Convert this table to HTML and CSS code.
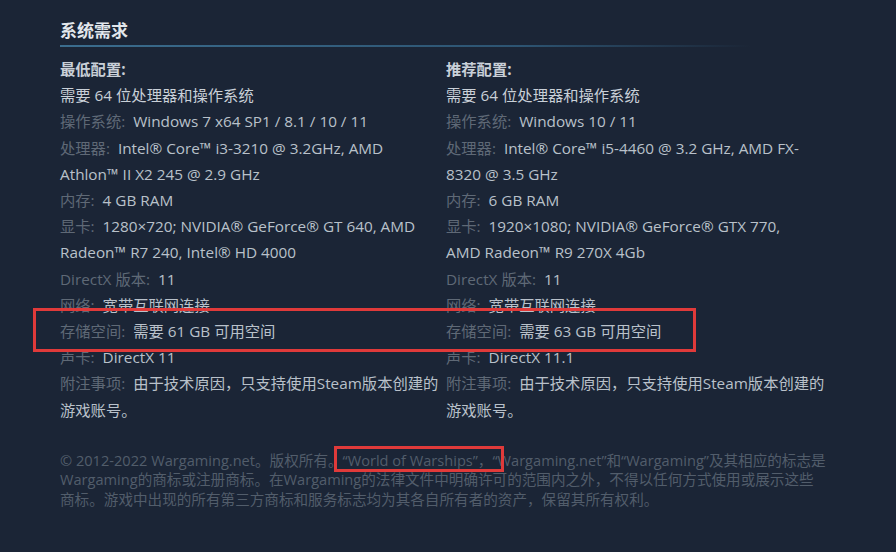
FILE: index.html
```html
<!DOCTYPE html>
<html lang="zh-CN">
<head>
  <meta charset="UTF-8" />
  <title>系统需求</title>
  <link rel="stylesheet" href="styles.css">
</head>
<body>
  <div class="page">
    <h2 class="title">系统需求</h2>

    <div class="sysreq">
      <div class="col">
        <div class="col-head">最低配置:</div>
        <ul>
          <li class="strong">需要 64 位处理器和操作系统</li>
          <li><span class="lbl">操作系统:</span> Windows 7 x64 SP1 / 8.1 / 10 / 11</li>
          <li><span class="lbl">处理器:</span> Intel® Core™ i3-3210 @ 3.2GHz, AMD Athlon™ II X2 245 @ 2.9 GHz</li>
          <li><span class="lbl">内存:</span> 4 GB RAM</li>
          <li><span class="lbl">显卡:</span> 1280×720; NVIDIA® GeForce® GT 640, AMD Radeon™ R7 240, Intel® HD 4000</li>
          <li><span class="lbl">DirectX 版本:</span> 11</li>
          <li><span class="lbl">网络:</span> 宽带互联网连接</li>
          <li><span class="lbl">存储空间:</span> 需要 61 GB 可用空间</li>
          <li><span class="lbl">声卡:</span> DirectX 11</li>
          <li><span class="lbl">附注事项:</span> 由于技术原因，只支持使用Steam版本创建的游戏账号。</li>
        </ul>
      </div>
      <div class="col">
        <div class="col-head">推荐配置:</div>
        <ul>
          <li class="strong">需要 64 位处理器和操作系统</li>
          <li><span class="lbl">操作系统:</span> Windows 10 / 11</li>
          <li><span class="lbl">处理器:</span> Intel® Core™ i5-4460 @ 3.2 GHz, AMD FX-8320 @ 3.5 GHz</li>
          <li><span class="lbl">内存:</span> 6 GB RAM</li>
          <li><span class="lbl">显卡:</span> 1920×1080; NVIDIA® GeForce® GTX 770,<br>AMD Radeon™ R9 270X 4Gb</li>
          <li><span class="lbl">DirectX 版本:</span> 11</li>
          <li><span class="lbl">网络:</span> 宽带互联网连接</li>
          <li><span class="lbl">存储空间:</span> 需要 63 GB 可用空间</li>
          <li><span class="lbl">声卡:</span> DirectX 11.1</li>
          <li><span class="lbl">附注事项:</span> 由于技术原因，只支持使用Steam版本创建的游戏账号。</li>
        </ul>
      </div>
    </div>

    <p class="legal">© 2012-2022 Wargaming.net。版权所有。“World of Warships”，“Wargaming.net”和“Wargaming”及其相应的标志是<br>Wargaming的商标或注册商标。在Wargaming的法律文件中明确许可的范围内之外，不得以任何方式使用或展示这些<br>商标。游戏中出现的所有第三方商标和服务标志均为其各自所有者的资产，保留其所有权利。</p>
  </div>

  <!-- annotation boxes drawn over the screenshot -->
  <div class="mark mark-storage"></div>
  <div class="mark mark-title"></div>
</body>
</html>
```

FILE: styles.css
```css
html, body {
  margin: 0;
  background: #1b2536;
}

body {
  position: relative;
  width: 896px;
  height: 552px;
  overflow: hidden;
  font-family: "Open Sans", "Noto Sans CJK SC", sans-serif;
  color: #b9c1ca;
}

.page {
  padding: 19px 0 0 60px;
  width: 768px;
}

.title {
  margin: 0;
  padding-bottom: 5px;
  font-size: 17px;
  font-weight: bold;
  color: #e2e7ec;
  line-height: 23px;
  background: linear-gradient(to right, #3b6d8e 0%, #2d5472 60%, rgba(45, 84, 114, 0) 90%) no-repeat left bottom / 100% 2px;
}

.sysreq {
  display: grid;
  grid-template-columns: 382px 382px;
  column-gap: 4px;
  margin-top: 9px;
  font-size: 15.3px;
  line-height: 26.2px;
}

.col-head {
  font-weight: bold;
  color: #c9d0d8;
}

.col ul {
  list-style: none;
  margin: 0;
  padding: 0;
}

.col li.strong {
  color: #c9d0d8;
}

.lbl {
  color: #5f6976;
  margin-right: 4px;
}

.legal {
  margin: 28px 0 0;
  font-size: 14.6px;
  line-height: 19.5px;
  color: #525d6b;
  white-space: nowrap;
}

.mark {
  position: absolute;
  border: 3px solid #e03a3a;
  box-sizing: border-box;
}

.mark-storage {
  left: 33px;
  top: 308px;
  width: 663px;
  height: 44px;
}

.mark-title {
  left: 334px;
  top: 446px;
  width: 170px;
  height: 26px;
}
```
